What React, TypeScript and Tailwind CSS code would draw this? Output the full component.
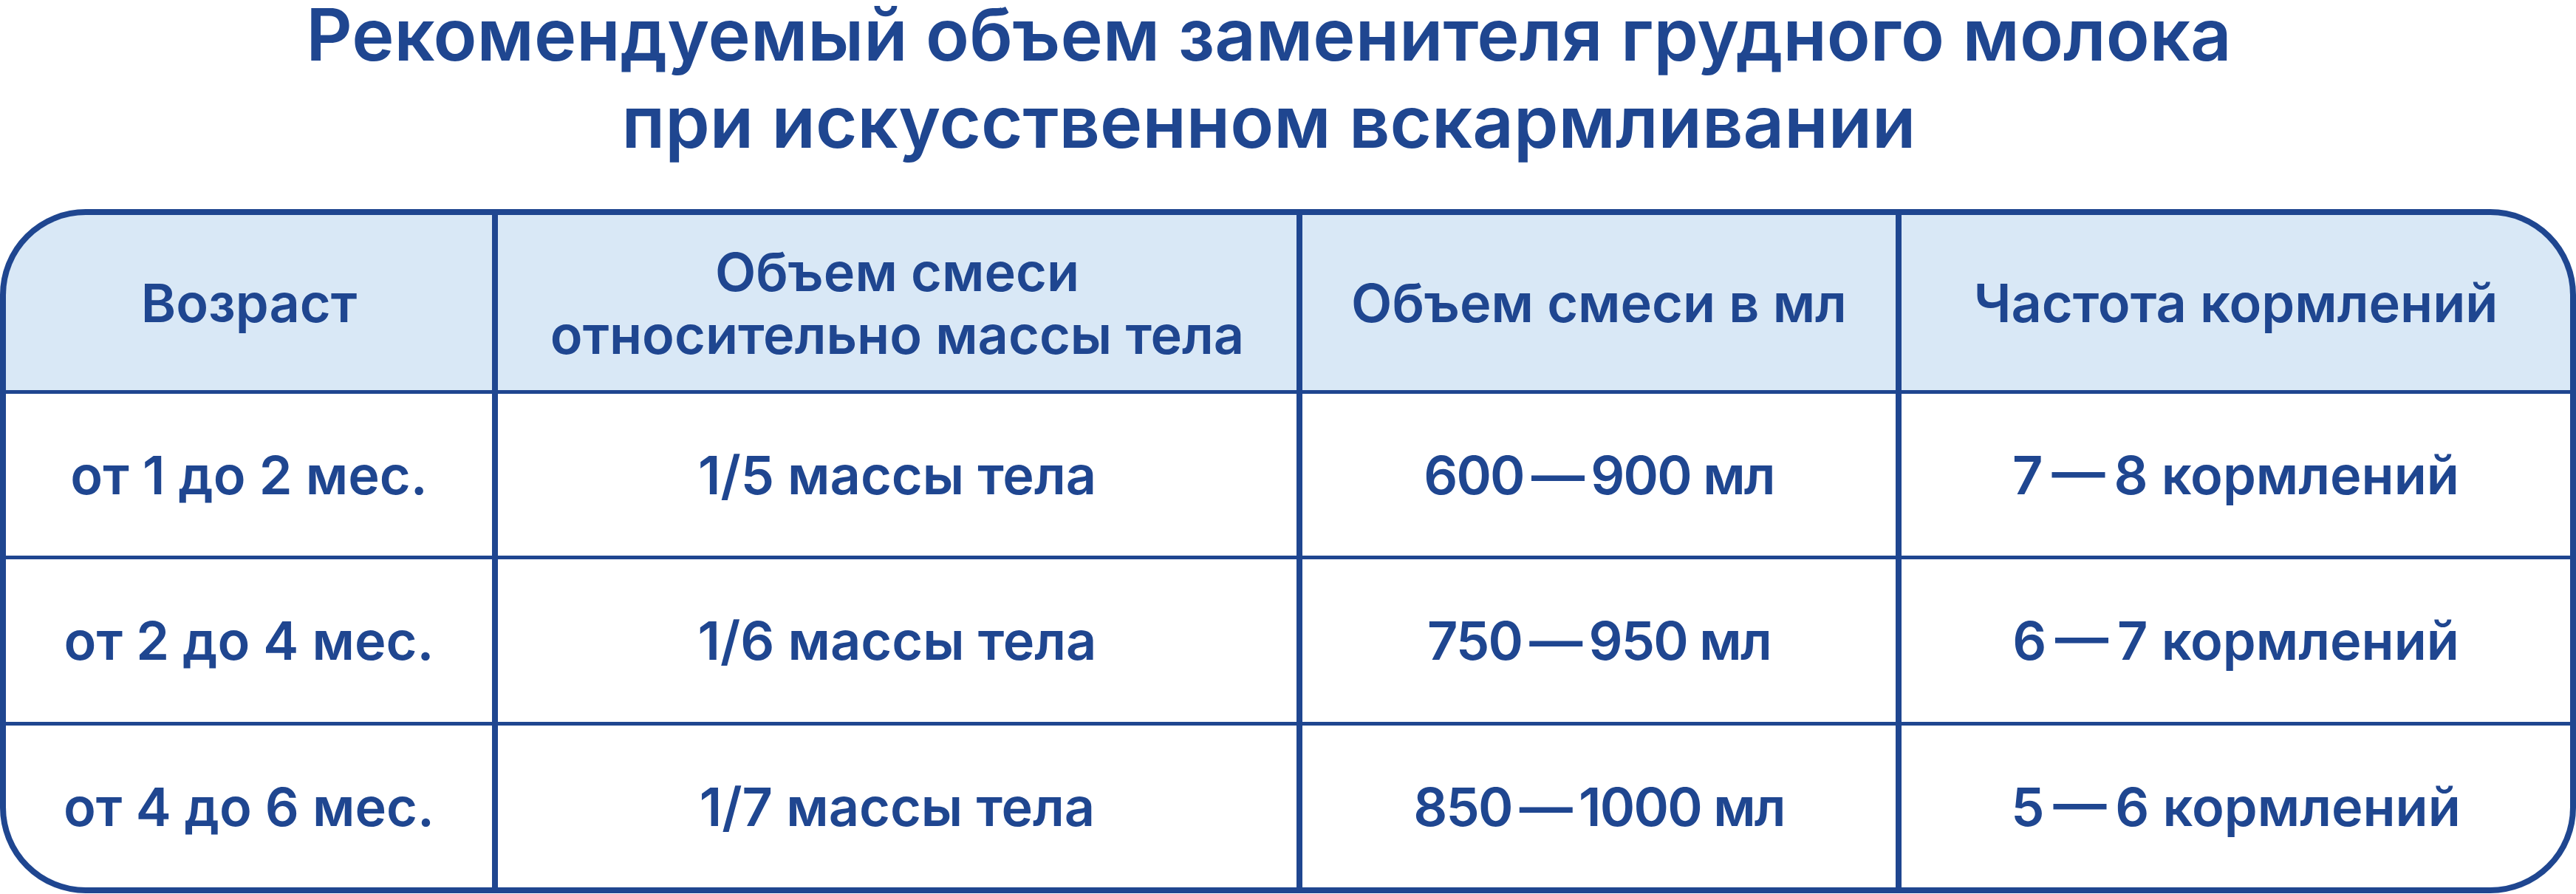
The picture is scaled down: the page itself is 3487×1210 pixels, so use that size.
import React from 'react';

const headers: string[][] = [
  ['Возраст'],
  ['Объем смеси', 'относительно массы тела'],
  ['Объем смеси в мл'],
  ['Частота кормлений'],
];

const rows: string[][] = [
  ['от 1 до 2 мес.', '1/5 массы тела', '600\u2009—\u2009900 мл', '7\u2009—\u20098 кормлений'],
  ['от 2 до 4 мес.', '1/6 массы тела', '750\u2009—\u2009950 мл', '6\u2009—\u20097 кормлений'],
  ['от 4 до 6 мес.', '1/7 массы тела', '850\u2009—\u20091000 мл', '5\u2009—\u20096 кормлений'],
];

const rowHeights = ['h-[219px]', 'h-[220px]', 'h-[219px]'];

export default function App() {
  return (
    <div
      className="w-[3487px] h-[1210px] bg-white text-[#1f4690] overflow-hidden"
      style={{ fontFamily: 'Inter, "Noto Sans", sans-serif' }}
    >
      <h1 className="mt-[-12px] pr-[52px] text-center text-[97px] leading-[118px] font-semibold">
        Рекомендуемый объем заменителя грудного молока
        <br />
        при искусственном вскармливании
      </h1>

      <div className="mt-[59px] w-[3487px] border-[8px] border-[#1f4690] rounded-[116px] overflow-hidden bg-[#1f4690]">
        <div className="grid grid-cols-[658px_1081px_803px_1fr] gap-x-[8px] gap-y-[5px] text-[72px] font-semibold">
          {headers.map((lines, i) => (
            <div
              key={i}
              className="h-[237px] bg-[#d9e8f6] flex flex-col items-center justify-center text-center leading-[85px]"
            >
              {lines.map((l) => (
                <span key={l}>{l}</span>
              ))}
            </div>
          ))}
          {rows.map((row, r) =>
            row.map((cell, c) => (
              <div
                key={`${r}-${c}`}
                className={`${rowHeights[r]} bg-white flex items-center justify-center text-center ${
                  c === 2 ? 'tracking-[-0.025em]' : ''
                }`}
              >
                {cell}
              </div>
            ))
          )}
        </div>
      </div>
    </div>
  );
}
